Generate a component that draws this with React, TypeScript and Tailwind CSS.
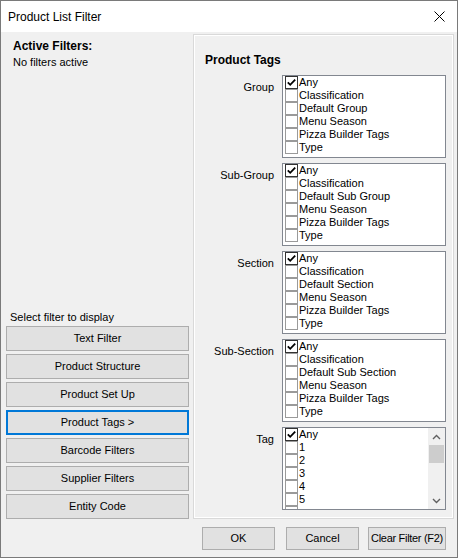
import React from "react";

const Check = ({ checked }: { checked: boolean }) => (
  <div
    className={`w-[13px] h-[13px] shrink-0 bg-white border ${checked ? "border-[#333333]" : "border-[#9a9a9a]"} flex items-center justify-center`}
  >
    {checked && (
      <svg width="11" height="11" viewBox="0 0 11 11">
        <path d="M1.8 5.4 L4.2 7.8 L9.2 2.6" fill="none" stroke="#000" strokeWidth="1.8" />
      </svg>
    )}
  </div>
);

const Item = ({ label, checked }: { label: string; checked?: boolean }) => (
  <div className="flex items-center h-[13px] shrink-0">
    <Check checked={!!checked} />
    <span className="ml-[1px] text-[11px] leading-[13px] text-black whitespace-nowrap">{label}</span>
  </div>
);

const ListRow = ({ label, items, scroll }: { label: string; items: string[]; scroll?: boolean }) => (
  <div className="flex">
    <div className="w-[80px] text-right pt-[6px] text-[11px] leading-[13px]">{label}</div>
    <div className="ml-[8px] w-[164px] h-[83px] border border-[#828790] bg-white flex overflow-hidden">
      <div className="flex-1 flex flex-col pl-[2px] overflow-hidden">
        {items.map((it, i) => (
          <Item key={i} label={it} checked={i === 0} />
        ))}
      </div>
      {scroll && (
        <div className="w-[17px] bg-[#f0f0f0] flex flex-col">
          <div className="h-[17px] flex items-center justify-center">
            <svg width="9" height="6" viewBox="0 0 9 6">
              <path d="M1 5 L4.5 1.5 L8 5" fill="none" stroke="#606060" strokeWidth="1.4" />
            </svg>
          </div>
          <div className="h-[18px] mx-[1px] bg-[#cdcdcd]" />
          <div className="flex-1" />
          <div className="h-[17px] flex items-center justify-center">
            <svg width="9" height="6" viewBox="0 0 9 6">
              <path d="M1 1 L4.5 4.5 L8 1" fill="none" stroke="#606060" strokeWidth="1.4" />
            </svg>
          </div>
        </div>
      )}
    </div>
  </div>
);

export default function App() {
  const leftButtons = [
    "Text Filter",
    "Product Structure",
    "Product Set Up",
    "Product Tags >",
    "Barcode Filters",
    "Supplier Filters",
    "Entity Code",
  ];
  return (
    <div className="w-[458px] h-[558px] border border-[#7a7a7a] flex flex-col bg-[#f0f0f0] text-black font-['Liberation_Sans',Arial,sans-serif]">
      <div className="h-[31px] bg-white flex items-center justify-between pl-[7px] pr-[12px] shrink-0">
        <span className="text-[12px] leading-[14px]">Product List Filter</span>
        <svg width="11" height="11" viewBox="0 0 11 11">
          <path d="M0.5 0.5 L10.5 10.5 M10.5 0.5 L0.5 10.5" stroke="#000" strokeWidth="1" />
        </svg>
      </div>
      <div className="flex-1 flex">
        <div className="w-[192px] flex flex-col">
          <div className="pl-[12px] pt-[7px]">
            <div className="text-[12px] leading-[14px] font-bold">Active Filters:</div>
            <div className="mt-[3px] text-[11px] leading-[13px]">No filters active</div>
          </div>
          <div className="mt-auto pl-[5px] pb-[38px]">
            <div className="pl-[4px] text-[11px] leading-[13px] mb-[2px]">Select filter to display</div>
            <div className="flex flex-col gap-[3px]">
              {leftButtons.map((b, i) => (
                <div
                  key={b}
                  className={`w-[183px] h-[25px] bg-[#e1e1e1] flex items-center justify-center text-[11px] ${i === 3 ? "border-2 border-[#0078d7]" : "border border-[#adadad]"}`}
                >
                  {b}
                </div>
              ))}
            </div>
          </div>
        </div>
        <div className="flex-1 flex flex-col pt-[2px] pr-[3px]">
          <div className="h-[485px] border border-[#d9d9d9] shadow-[inset_1px_1px_0_#ffffff,inset_-1px_-1px_0_#ffffff] flex flex-col">
            <div className="pl-[11px] pt-[18px] text-[12px] leading-[14px] font-bold">Product Tags</div>
            <div className="mt-[8px] flex flex-col gap-[5px]">
              <ListRow label="Group" items={["Any", "Classification", "Default Group", "Menu Season", "Pizza Builder Tags", "Type"]} />
              <ListRow label="Sub-Group" items={["Any", "Classification", "Default Sub Group", "Menu Season", "Pizza Builder Tags", "Type"]} />
              <ListRow label="Section" items={["Any", "Classification", "Default Section", "Menu Season", "Pizza Builder Tags", "Type"]} />
              <ListRow label="Sub-Section" items={["Any", "Classification", "Default Sub Section", "Menu Season", "Pizza Builder Tags", "Type"]} />
              <ListRow label="Tag" items={["Any", "1", "2", "3", "4", "5", ""]} scroll />
            </div>
          </div>
          <div className="mt-[8px] flex justify-end pr-[8px]">
            <div className="w-[73px] h-[23px] bg-[#e1e1e1] border border-[#adadad] flex items-center justify-center text-[11px]">OK</div>
            <div className="ml-[11px] w-[73px] h-[23px] bg-[#e1e1e1] border border-[#adadad] flex items-center justify-center text-[11px]">Cancel</div>
            <div className="ml-[9px] w-[78px] h-[23px] bg-[#e1e1e1] border border-[#adadad] flex items-center justify-center text-[11px] whitespace-nowrap tracking-[-0.3px]">Clear Filter (F2)</div>
          </div>
        </div>
      </div>
    </div>
  );
}
